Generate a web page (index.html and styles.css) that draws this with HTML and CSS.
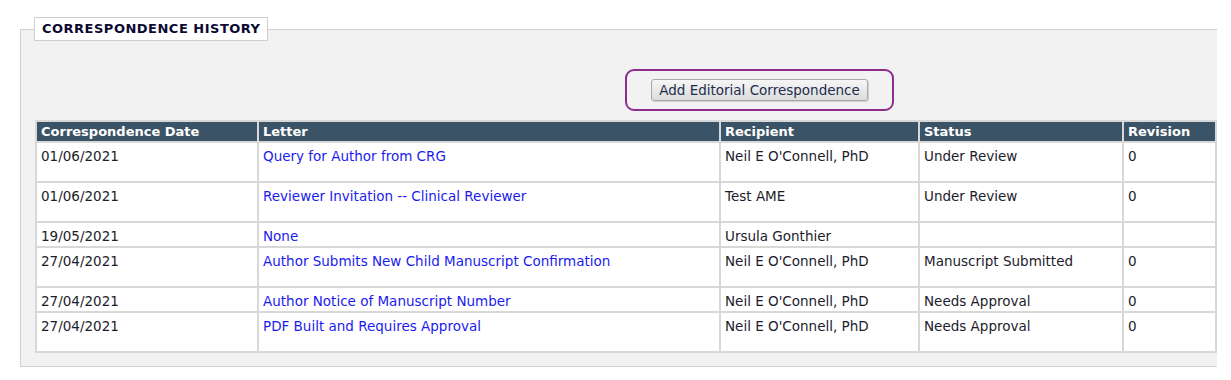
FILE: index.html
```html
<!DOCTYPE html>
<html lang="en">
<head>
    <meta charset="UTF-8">
    <title>Correspondence History</title>
    <link rel="stylesheet" href="styles.css">
</head>
<body>
    <fieldset class="panel">
        <legend class="panel-title">CORRESPONDENCE HISTORY</legend>

        <div class="actions">
            <div class="highlight">
                <button class="btn">Add Editorial Correspondence</button>
            </div>
        </div>

        <table class="history">
            <thead>
                <tr>
                    <th class="col-date">Correspondence Date</th>
                    <th class="col-letter">Letter</th>
                    <th class="col-recipient">Recipient</th>
                    <th class="col-status">Status</th>
                    <th class="col-rev">Revision</th>
                </tr>
            </thead>
            <tbody>
                <tr class="tall">
                    <td>01/06/2021</td>
                    <td><a href="#">Query for Author from CRG</a></td>
                    <td>Neil E O'Connell, PhD</td>
                    <td>Under Review</td>
                    <td>0</td>
                </tr>
                <tr class="tall">
                    <td>01/06/2021</td>
                    <td><a href="#">Reviewer Invitation -- Clinical Reviewer</a></td>
                    <td>Test AME</td>
                    <td>Under Review</td>
                    <td>0</td>
                </tr>
                <tr>
                    <td>19/05/2021</td>
                    <td><a href="#">None</a></td>
                    <td>Ursula Gonthier</td>
                    <td></td>
                    <td></td>
                </tr>
                <tr class="tall">
                    <td>27/04/2021</td>
                    <td><a href="#">Author Submits New Child Manuscript Confirmation</a></td>
                    <td>Neil E O'Connell, PhD</td>
                    <td>Manuscript Submitted</td>
                    <td>0</td>
                </tr>
                <tr>
                    <td>27/04/2021</td>
                    <td><a href="#">Author Notice of Manuscript Number</a></td>
                    <td>Neil E O'Connell, PhD</td>
                    <td>Needs Approval</td>
                    <td>0</td>
                </tr>
                <tr class="tall">
                    <td>27/04/2021</td>
                    <td><a href="#">PDF Built and Requires Approval</a></td>
                    <td>Neil E O'Connell, PhD</td>
                    <td>Needs Approval</td>
                    <td>0</td>
                </tr>
            </tbody>
        </table>
    </fieldset>
</body>
</html>
```

FILE: styles.css
```css
body {
    margin: 0;
    padding: 17px 14px 0 20px;
    background: #ffffff;
    font-family: "DejaVu Sans", Verdana, sans-serif;
    font-size: 13px;
    color: #1c1c2c;
}
.panel {
    width: 1197px;
    margin: 0;
    padding: 0 0 13px 14px;
    background: #f2f2f2;
    border: 1px solid #cfcfcf;
    border-right: none;
    box-sizing: border-box;
}
.panel-title {
    margin-left: -1px;
    padding: 4px 6px 4px 7px;
    background: #ffffff;
    border: 1px solid #cfcfcf;
    font-size: 13px;
    font-weight: bold;
    letter-spacing: 0.5px;
    line-height: 14px;
    color: #0a0a32;
}
.actions {
    display: flex;
    padding: 28px 0 9px 590px;
}
.highlight {
    width: 265px;
    height: 38px;
    display: flex;
    align-items: center;
    justify-content: center;
    border: 2px solid #8e2c8e;
    border-radius: 9px;
}
.btn {
    font-family: "DejaVu Sans", Verdana, sans-serif;
    font-size: 13.5px;
    color: #1d2d4d;
    padding: 2px 7px;
    height: 22px;
    background: linear-gradient(#f6f6f6, #dcdcdc);
    border: 1px solid #a8a8a8;
    border-radius: 3px;
    box-shadow: 1px 1px 1px rgba(0, 0, 0, 0.15);
}
.history {
    width: 1182px;
    border-collapse: collapse;
    background: #ffffff;
    border: 2px solid #d8d8d8;
    table-layout: fixed;
}
.history th {
    background: #3b5366;
    color: #ffffff;
    font-weight: bold;
    text-align: left;
    padding: 2px 4px 1px;
    line-height: 16px;
    border: 2px solid #d8d8d8;
    border-top: none;
}
.history td {
    padding: 5px 4px 2px;
    font-size: 13.5px;
    line-height: 16px;
    vertical-align: top;
    border: 2px solid #d8d8d8;
}
.history tr.tall td {
    padding-bottom: 17px;
}
.history a {
    color: #1b1bf0;
    text-decoration: none;
}
.col-date { width: 212px; }
.col-letter { width: 452px; }
.col-recipient { width: 189px; }
.col-status { width: 194px; }
.col-rev { width: auto; }
```
